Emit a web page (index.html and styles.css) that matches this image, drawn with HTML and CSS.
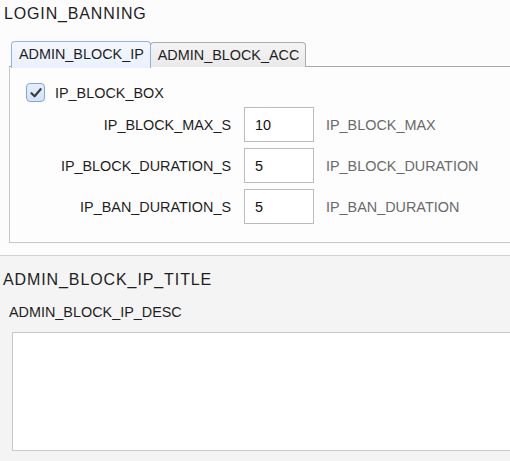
FILE: index.html
```html
<!DOCTYPE html>
<html lang="en">
<head>
    <meta charset="UTF-8">
    <title>Login Banning</title>
    <link rel="stylesheet" href="styles.css">
</head>
<body>
    <div class="settings">
        <h1 class="section-title">LOGIN_BANNING</h1>

        <div class="tabs">
            <div class="tab active">ADMIN_BLOCK_IP</div>
            <div class="tab">ADMIN_BLOCK_ACC</div>
        </div>

        <div class="panel">
            <label class="check-row">
                <span class="checkbox">
                    <svg width="14" height="14" viewBox="0 0 14 14">
                        <path d="M2.5 7.2 L5.6 10.3 L11.6 3.2" fill="none" stroke="#3c3c3c" stroke-width="2.2" stroke-linecap="round" stroke-linejoin="round"/>
                    </svg>
                </span>
                IP_BLOCK_BOX
            </label>

            <div class="fields">
                <label class="field-label" for="block-max">IP_BLOCK_MAX_S</label>
                <input class="field-input" id="block-max" type="text" value="10">
                <span class="field-hint">IP_BLOCK_MAX</span>

                <label class="field-label" for="block-duration">IP_BLOCK_DURATION_S</label>
                <input class="field-input" id="block-duration" type="text" value="5">
                <span class="field-hint">IP_BLOCK_DURATION</span>

                <label class="field-label" for="ban-duration">IP_BAN_DURATION_S</label>
                <input class="field-input" id="ban-duration" type="text" value="5">
                <span class="field-hint">IP_BAN_DURATION</span>
            </div>
        </div>
    </div>

    <div class="help">
        <h2 class="help-title">ADMIN_BLOCK_IP_TITLE</h2>
        <p class="help-desc">ADMIN_BLOCK_IP_DESC</p>
        <textarea class="help-text"></textarea>
    </div>
</body>
</html>
```

FILE: styles.css
```css
html, body {
    margin: 0;
    padding: 0;
}
body {
    font-family: "Liberation Sans", Arial, sans-serif;
    font-size: 14.4px;
    color: #1e1e1e;
    background-color: #f4f4f4;
    overflow: hidden;
    height: 461px;
}
.settings {
    background-color: #fcfcfc;
    padding: 4px 0 12px;
    border-bottom: 1px solid #d2d2d2;
}
.section-title {
    margin: 0 0 17px 4px;
    font-size: 16px;
    font-weight: normal;
    line-height: 20px;
    letter-spacing: 0.85px;
}
.tabs {
    display: flex;
    margin-left: 9px;
    padding-left: 2px;
    border-bottom: 1px solid #ababab;
    height: 25px;
}
.tab {
    height: 24px;
    line-height: 24px;
    padding: 0 6px 0 7px;
    border: 1px solid #acacac;
    border-bottom: none;
    border-radius: 4px 4px 0 0;
    background: linear-gradient(#f4f4f4, #e9e9e9);
    margin-top: 1px;
}
.tab.active {
    margin-top: 0;
    height: 26px;
    border-color: #8fb3e6;
    background: linear-gradient(#f4f8fe, #e8f1fd);
    position: relative;
    z-index: 1;
}
.tab + .tab {
    margin-left: -1px;
}
.panel {
    margin-left: 9px;
    padding: 16px 0 18px 16px;
    border: 1px solid #c8c8c8;
    border-top: none;
    border-right: none;
    background-color: #fdfdfd;
}
.check-row {
    display: flex;
    align-items: center;
    gap: 10px;
    height: 19px;
}
.checkbox {
    display: flex;
    align-items: center;
    justify-content: center;
    box-sizing: border-box;
    width: 19px;
    height: 19px;
    border: 1px solid #7ea6de;
    border-radius: 4px;
    background: linear-gradient(#e4eefb, #d3e3f8);
}
.fields {
    display: grid;
    grid-template-columns: 205px 70px auto;
    column-gap: 13px;
    row-gap: 6px;
    align-items: center;
    margin-top: 5px;
}
.field-label {
    text-align: right;
}
.field-input {
    box-sizing: border-box;
    width: 70px;
    height: 35px;
    padding: 0 10px;
    border: 1px solid #bcbcbc;
    background: #fff;
    font: inherit;
    color: #111;
    outline: none;
}
.field-hint {
    color: #6a6a6a;
    margin-left: -1px;
}
.help {
    padding: 14px 0 0;
}
.help-title {
    margin: 0 0 13px 3px;
    font-size: 16px;
    font-weight: normal;
    line-height: 20px;
    letter-spacing: 0.9px;
}
.help-desc {
    margin: 0 0 11px 9px;
    line-height: 18px;
}
.help-text {
    display: block;
    box-sizing: border-box;
    margin-left: 12px;
    width: calc(100% - 12px);
    height: 119px;
    border: 1px solid #c8c8c8;
    border-right: none;
    background: #fff;
    resize: none;
    outline: none;
}
```
